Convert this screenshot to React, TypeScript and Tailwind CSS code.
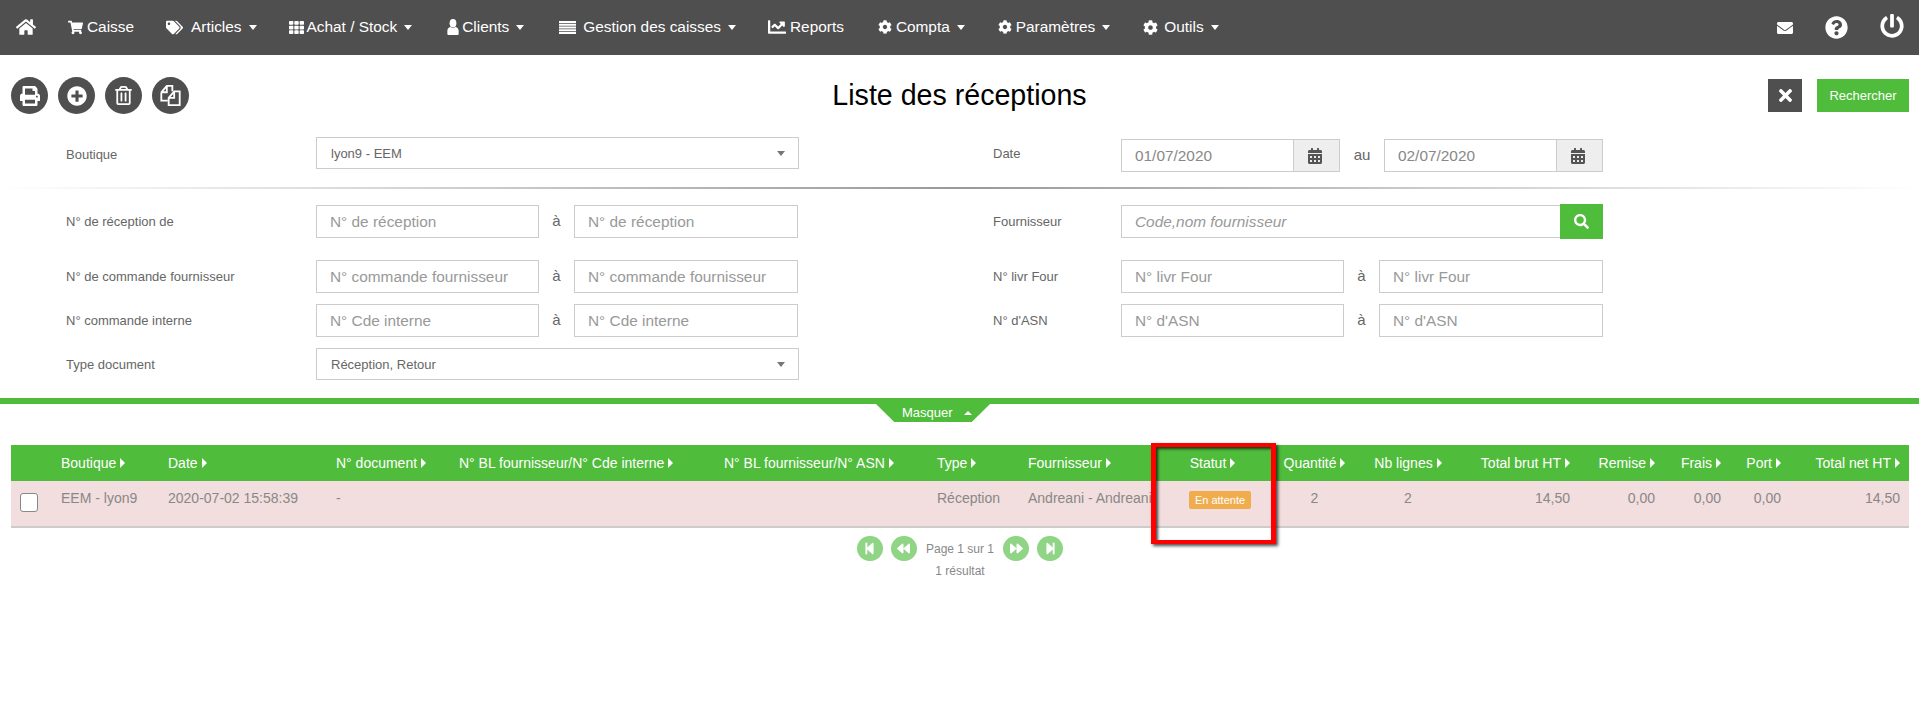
import React from "react";
import {
  FaHome, FaShoppingCart, FaTags, FaTh, FaChartLine, FaCog,
  FaEnvelope, FaQuestionCircle, FaPowerOff, FaPrint, FaPlusCircle, FaRegTrashAlt,
  FaTimes, FaSearch, FaCalendarAlt, FaStepBackward, FaBackward, FaForward, FaStepForward,
} from "react-icons/fa";

const Caret = () => (
  <span className="ml-[7px] inline-block w-0 h-0 border-x-[4.5px] border-x-transparent border-t-[5px] border-t-white" />
);

const UserIcon = () => (
  <svg width="12" height="16" viewBox="0 0 12 17" fill="white" className="block">
    <ellipse cx="6" cy="4.5" rx="3.6" ry="4.5" />
    <path d="M0 16V12.5C0 10 2 8.5 3.5 8.5Q6 10.5 8.5 8.5C10 8.5 12 10 12 12.5V16Q12 17 11 17H1Q0 17 0 16Z" />
  </svg>
);

const StripesIcon = () => (
  <svg width="17" height="13" viewBox="0 0 17 13" fill="white" className="block">
    <rect y="0" width="17" height="2" />
    <rect y="2.75" width="17" height="2" />
    <rect y="5.5" width="17" height="2" />
    <rect y="8.25" width="17" height="2" />
    <rect y="11" width="17" height="2" />
  </svg>
);

const CopyIcon = () => (
  <svg width="23" height="23" viewBox="0 0 24 25" fill="none" stroke="white" strokeWidth="2" className="block">
    <path d="M2 9L8 2H14V8M2 9V18H9M2 9H8V2" />
    <path d="M10 15L16 8H22V23H10ZM10 15H16V8" />
  </svg>
);

function NavItem({ icon, label, caret, gap, extra = "" }: { icon: React.ReactNode; label?: string; caret?: boolean; gap?: string; extra?: string }) {
  return (
    <div className={`flex items-center px-4 text-[15.4px] text-white whitespace-nowrap ${extra}`}>
      <span className={gap ?? "mr-1"}>{icon}</span>
      {label && <span className="mb-[2px]">{label}</span>}
      {caret && <Caret />}
    </div>
  );
}

const inputCls =
  "h-[33px] min-w-0 border border-[#ccc] bg-white px-[13px] text-[15.4px] text-[#888] outline-none placeholder:text-[#999]";

function Range({ ph, left, right, sep }: { ph: string; left: string; right: string; sep: string }) {
  return (
    <div className="flex items-center">
      <input placeholder={ph} className={`${inputCls} ${left}`} />
      <span className={`text-[15px] text-[#666] text-center ${sep}`}>à</span>
      <input placeholder={ph} className={`${inputCls} ${right}`} />
    </div>
  );
}

const Label = ({ children, w }: { children: React.ReactNode; w: string }) => (
  <div className={`${w} shrink-0 h-[33px] flex items-center text-[13px] text-[#666]`}>{children}</div>
);

const Select = ({ value }: { value: string }) => (
  <div className="w-[483px] h-[32px] border border-[#ccc] bg-white flex items-center justify-between pl-[14px] pr-[13px] text-[13px] text-[#666]">
    <span className="mt-[2px]">{value}</span>
    <span className="w-0 h-0 border-x-[4px] border-x-transparent border-t-[5px] border-t-[#777]" />
  </div>
);

const DateInput = ({ value, w }: { value: string; w: string }) => (
  <div className={`${w} flex h-[33px] border border-[#ccc]`}>
    <input readOnly value={value} className="flex-1 min-w-0 px-[13px] text-[15.4px] text-[#888] outline-none bg-white" />
    <div className="w-[46px] shrink-0 bg-[#eee] border-l border-[#ccc] flex items-center justify-center pr-[3px] text-[#555]">
      <FaCalendarAlt size={16} />
    </div>
  </div>
);

const Row = ({ className, left, right }: { className: string; left: React.ReactNode; right?: React.ReactNode }) => (
  <div className={`flex items-start pl-[66px] ${className}`}>
    <div className="flex items-center w-[733px]">{left}</div>
    <div className="flex items-center ml-[194px]">{right}</div>
  </div>
);

const RoundBtn = ({ children }: { children: React.ReactNode }) => (
  <div className="w-[37px] h-[37px] rounded-full bg-[#4f4f4f] text-white flex items-center justify-center text-[20px]">
    {children}
  </div>
);

const columns = [
  { label: "", w: "w-[41px]", h: "text-left" },
  { label: "Boutique", w: "w-[107px]", h: "text-left" },
  { label: "Date", w: "w-[168px]", h: "text-left" },
  { label: "N° document", w: "w-[123px]", h: "text-left" },
  { label: "N° BL fournisseur/N° Cde interne", w: "w-[265px]", h: "text-left" },
  { label: "N° BL fournisseur/N° ASN", w: "w-[213px]", h: "text-left" },
  { label: "Type", w: "w-[91px]", h: "text-left" },
  { label: "Fournisseur", w: "w-[132px]", h: "text-left" },
  { label: "Statut", w: "w-[123px]", h: "text-center" },
  { label: "Quantité", w: "w-[81px]", h: "text-center" },
  { label: "Nb lignes", w: "w-[106px]", h: "text-center" },
  { label: "Total brut HT", w: "w-[118px]", h: "text-right" },
  { label: "Remise", w: "w-[85px]", h: "text-right" },
  { label: "Frais", w: "w-[66px]", h: "text-right" },
  { label: "Port", w: "w-[60px]", h: "text-right" },
  { label: "Total net HT", w: "w-[119px]", h: "text-right" },
];

const Td = ({ children, className = "" }: { children?: React.ReactNode; className?: string }) => (
  <td className={`align-top px-[9px] pt-[7px] whitespace-nowrap overflow-hidden ${className}`}>{children}</td>
);

const PageBtn = ({ children }: { children: React.ReactNode }) => (
  <div className="w-[26px] h-[25px] rounded-full bg-[#8fd585] text-white flex items-center justify-center text-[13px]">
    {children}
  </div>
);

export default function App() {
  return (
    <div className="min-h-[719px] bg-white font-['Liberation_Sans',Arial,sans-serif]">
      <nav className="h-[55px] bg-[#4f4f4f] flex items-center justify-between">
        <div className="flex items-center">
          <NavItem icon={<FaHome size={20} />} gap="mr-0" />
          <NavItem icon={<FaShoppingCart size={15} />} label="Caisse" />
          <NavItem icon={<FaTags size={17} />} label="Articles" caret gap="mr-2" />
          <NavItem icon={<FaTh size={15} />} label="Achat / Stock" caret gap="mr-[3px]" extra="mr-[3px]" />
          <NavItem icon={<UserIcon />} label="Clients" caret gap="mr-[3px]" extra="mr-[3px]" />
          <NavItem icon={<StripesIcon />} label="Gestion des caisses" caret gap="mr-[7px]" />
          <NavItem icon={<FaChartLine size={18} />} label="Reports" gap="mr-[4px]" extra="mr-[2px]" />
          <NavItem icon={<FaCog size={14} />} label="Compta" caret extra="mr-px" />
          <NavItem icon={<FaCog size={14} />} label="Paramètres" caret extra="mr-px" />
          <NavItem icon={<FaCog size={15} />} label="Outils" caret gap="mr-[6px]" />
        </div>
        <div className="flex items-center text-white">
          <FaEnvelope size={16} className="mr-[32px]" />
          <FaQuestionCircle size={23} className="mr-[32px]" />
          <FaPowerOff size={24} className="mr-[15px] mb-[3px]" />
        </div>
      </nav>

      <header className="mt-[22px] px-[10px] grid grid-cols-[1fr_auto_1fr] items-center h-[37px]">
        <div className="flex gap-[10px] pl-px">
          <RoundBtn><FaPrint /></RoundBtn>
          <RoundBtn><FaPlusCircle /></RoundBtn>
          <RoundBtn><FaRegTrashAlt size={19} /></RoundBtn>
          <RoundBtn><CopyIcon /></RoundBtn>
        </div>
        <h1 className="text-[28.6px] leading-none text-black">Liste des réceptions</h1>
        <div className="flex justify-end gap-[15px]">
          <div className="w-[34px] h-[33px] bg-[#4f4f4f] text-white flex items-center justify-center">
            <FaTimes size={19} />
          </div>
          <div className="w-[92px] h-[33px] bg-[#50bc3b] text-white text-[13px] flex items-center justify-center">
            Rechercher
          </div>
        </div>
      </header>

      <Row
        className="mt-[23px]"
        left={
          <>
            <div className="w-[250px] h-[35px] shrink-0 flex items-center text-[13px] text-[#666]">Boutique</div>
            <div className="h-[35px]"><Select value="lyon9 - EEM" /></div>
          </>
        }
        right={
          <>
            <div className="w-[128px] shrink-0 h-[33px] mt-[-2px] flex items-center text-[13px] text-[#666]">Date</div>
            <div className="flex items-center mt-[2px]">
              <DateInput value="01/07/2020" w="w-[219px]" />
              <span className="w-[44px] text-center text-[15px] text-[#666]">au</span>
              <DateInput value="02/07/2020" w="w-[219px]" />
            </div>
          </>
        }
      />

      <div className="mt-[15px] h-[2px] bg-gradient-to-r from-transparent via-[#999] to-transparent" />

      <Row
        className="mt-[15px] h-[35px]"
        left={
          <div className="flex items-center pt-[1px]">
            <Label w="w-[250px]">N° de réception de</Label>
            <Range ph="N° de réception" left="w-[223px]" right="w-[224px]" sep="w-[35px]" />
          </div>
        }
        right={
          <>
            <Label w="w-[128px]">Fournisseur</Label>
            <input
              placeholder="Code,nom fournisseur"
              className="w-[439px] h-[33px] border border-[#ccc] border-r-0 px-[13px] text-[15.4px] italic outline-none placeholder:text-[#999]"
            />
            <div className="w-[43px] h-[35px] bg-[#50bc3b] text-white flex items-center justify-center">
              <FaSearch size={15} />
            </div>
          </>
        }
      />

      <Row
        className="mt-[21px]"
        left={<><Label w="w-[250px]">N° de commande fournisseur</Label><Range ph="N° commande fournisseur" left="w-[223px]" right="w-[224px]" sep="w-[35px]" /></>}
        right={<><Label w="w-[128px]">N° livr Four</Label><Range ph="N° livr Four" left="w-[223px]" right="w-[224px]" sep="w-[35px]" /></>}
      />
      <Row
        className="mt-[11px]"
        left={<><Label w="w-[250px]">N° commande interne</Label><Range ph="N° Cde interne" left="w-[223px]" right="w-[224px]" sep="w-[35px]" /></>}
        right={<><Label w="w-[128px]">N° d'ASN</Label><Range ph="N° d'ASN" left="w-[223px]" right="w-[224px]" sep="w-[35px]" /></>}
      />
      <Row
        className="mt-[11px]"
        left={<><div className="w-[250px] h-[34px] flex items-center text-[13px] text-[#666]">Type document</div><div className="h-[34px]"><Select value="Réception, Retour" /></div></>}
      />

      <div className="mt-[16px] h-[6px] bg-[#50bc3b]" />
      <div className="ml-[876px] w-[114px] h-[18px] pl-[26px] bg-[#50bc3b] text-white text-[13px] flex items-center gap-[11px] [clip-path:polygon(0_0,100%_0,84%_100%,16%_100%)]">
        <span>Masquer</span>
        <span className="w-0 h-0 border-x-[4px] border-x-transparent border-b-[4px] border-b-white" />
      </div>

      <div className="relative mt-[23px] ml-[11px] mr-[10px]">
        <table className="w-[1898px] table-fixed border-collapse text-[14px]">
          <colgroup>
            {columns.map((c, i) => <col key={i} className={c.w} />)}
          </colgroup>
          <thead>
            <tr className="h-[36px] bg-[#50bc3b] text-white">
              {columns.map((c, i) => (
                <th key={i} className={`px-[9px] font-normal whitespace-nowrap ${c.h}`}>
                  {c.label}
                  {c.label && (
                    <span className="ml-[4px] inline-block w-0 h-0 border-y-[5px] border-y-transparent border-l-[5px] border-l-white" />
                  )}
                </th>
              ))}
            </tr>
          </thead>
          <tbody>
            <tr className="h-[46px] bg-[#f2dede] text-[#888] border-b-2 border-[#ccc]">
              <td className="align-top pl-[9px] pt-[12px]">
                <input type="checkbox" className="appearance-none block w-[18px] h-[19px] bg-white border border-[#888] rounded-[3px]" />
              </td>
              <Td>EEM - lyon9</Td>
              <Td>2020-07-02 15:58:39</Td>
              <Td>-</Td>
              <Td />
              <Td />
              <Td>Réception</Td>
              <Td>Andreani - Andreani</Td>
              <td className="align-top pt-[10px] pl-[38px]">
                <span className="block w-[62px] h-[18px] rounded-[2px] bg-[#f0ad4e] text-white text-[11px] leading-[18px] text-center">En attente</span>
              </td>
              <Td className="text-center">2</Td>
              <Td className="text-center">2</Td>
              <Td className="text-right">14,50</Td>
              <Td className="text-right">0,00</Td>
              <Td className="text-right">0,00</Td>
              <Td className="text-right">0,00</Td>
              <Td className="text-right">14,50</Td>
            </tr>
          </tbody>
        </table>

        <div className="mt-[8px] flex justify-center items-center gap-[8px] text-[12px] text-[#888]">
          <PageBtn><FaStepBackward /></PageBtn>
          <PageBtn><FaBackward /></PageBtn>
          <span className="mx-[1px]">Page 1 sur 1</span>
          <PageBtn><FaForward /></PageBtn>
          <PageBtn><FaStepForward /></PageBtn>
        </div>
        <div className="mt-[3px] text-center text-[12px] leading-[14px] text-[#888]">1 résultat</div>

        <div className="absolute left-[1140px] top-[-2px] w-[125px] h-[101px] border-x-[5px] border-y-[4px] border-[#f00] shadow-[2px_2px_3px_rgba(0,0,0,0.7),inset_2px_2px_3px_rgba(0,0,0,0.7)]" />
      </div>
    </div>
  );
}
